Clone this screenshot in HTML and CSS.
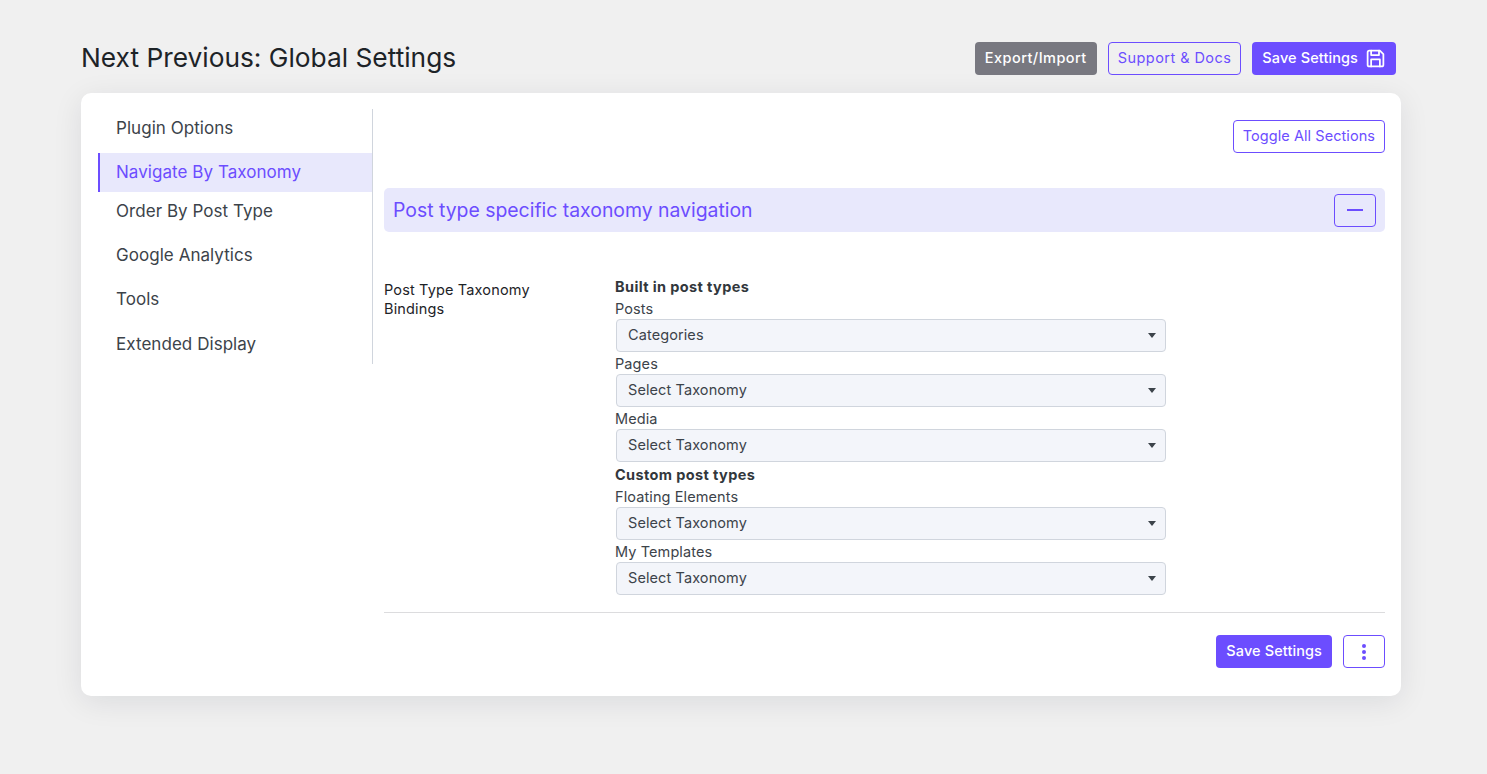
FILE: index.html
```html
<!DOCTYPE html>
<html lang="en">
<head>
  <meta charset="UTF-8">
  <title>Next Previous: Global Settings</title>
  <link rel="stylesheet" href="styles.css">
</head>
<body>
  <div class="wrap">
    <div class="page-header">
      <h1>Next Previous: Global Settings</h1>
      <div class="header-actions">
        <a class="btn btn-grey">Export/Import</a>
        <a class="btn btn-outline btn-wide">Support &amp; Docs</a>
        <a class="btn btn-primary">Save Settings
          <svg class="save-icon" viewBox="0 0 24 24" width="21" height="21" fill="none" stroke="currentColor" stroke-width="2" stroke-linejoin="round" stroke-linecap="round">
            <path d="M5 3h12l4 4v12a2 2 0 0 1-2 2H5a2 2 0 0 1-2-2V5a2 2 0 0 1 2-2z"/>
            <path d="M17 21v-8H7v8"/>
            <path d="M7 3v5h9V3"/>
          </svg>
        </a>
      </div>
    </div>

    <div class="card">
      <ul class="side-nav">
        <li>Plugin Options</li>
        <li class="active">Navigate By Taxonomy</li>
        <li>Order By Post Type</li>
        <li>Google Analytics</li>
        <li>Tools</li>
        <li>Extended Display</li>
      </ul>

      <div class="content">
        <div class="toggle-row">
          <a class="btn btn-outline btn-toggle">Toggle All Sections</a>
        </div>

        <div class="section-head">
          <h2>Post type specific taxonomy navigation</h2>
          <a class="btn btn-outline btn-icon">
            <svg viewBox="0 0 16 16" width="16" height="16" fill="none" stroke="currentColor" stroke-width="2"><path d="M0 8h16"/></svg>
          </a>
        </div>

        <div class="form-row">
          <div class="form-label">Post Type Taxonomy Bindings</div>
          <div class="form-fields">
            <div class="group-title">Built in post types</div>
            <label class="field-label">Posts</label>
            <div class="select-box"><select><option>Categories</option></select></div>
            <label class="field-label">Pages</label>
            <div class="select-box"><select><option>Select Taxonomy</option></select></div>
            <label class="field-label">Media</label>
            <div class="select-box"><select><option>Select Taxonomy</option></select></div>
            <div class="group-title">Custom post types</div>
            <label class="field-label">Floating Elements</label>
            <div class="select-box"><select><option>Select Taxonomy</option></select></div>
            <label class="field-label">My Templates</label>
            <div class="select-box"><select><option>Select Taxonomy</option></select></div>
          </div>
        </div>

        <div class="footer-actions">
          <a class="btn btn-primary">Save Settings</a>
          <a class="btn btn-outline btn-dots">
            <svg viewBox="0 0 6 20" width="6" height="20" fill="currentColor"><circle cx="3" cy="4" r="2"/><circle cx="3" cy="10" r="2"/><circle cx="3" cy="16" r="2"/></svg>
          </a>
        </div>
      </div>
    </div>
  </div>
</body>
</html>
```

FILE: styles.css
```css
* {
  box-sizing: border-box;
}
html, body {
  min-height: 100%;
}
body {
  background: #f0f0f0;
  font-family: Inter, 'Noto Sans', sans-serif;
  margin: 0;
  color: #3c434a;
  font-size: 15px;
}
.wrap {
  width: 1320px;
  margin-left: 81px;
  min-height: 100vh;
}
.page-header {
  display: flex;
  justify-content: space-between;
  align-items: center;
  height: 93px;
  padding-top: 24px;
  padding-right: 5px;
}
.page-header h1 {
  margin: 0 0 2px 0;
  font-size: 26.3px;
  font-weight: 400;
  color: #1d2327;
}
.header-actions {
  display: flex;
  gap: 11px;
}
.btn {
  display: inline-flex;
  align-items: center;
  justify-content: center;
  height: 33px;
  padding: 0 9px 2px 9px;
  border-radius: 4px;
  border: 1px solid transparent;
  font-size: 14.5px;
  white-space: nowrap;
}
.btn-grey {
  background: #787880;
  color: #fff;
  font-weight: 450;
  letter-spacing: 0.45px;
}
.btn-outline {
  background: transparent;
  border-color: #6c4dff;
  color: #6c4dff;
}
.btn-wide {
  letter-spacing: 0.45px;
}
.btn-toggle {
  letter-spacing: 0.06px;
}
.btn-primary {
  background: #6c4dff;
  color: #fff;
  font-weight: 450;
  letter-spacing: 0.1px;
}
.save-icon {
  margin-left: 7px;
  margin-top: 2px;
}
.card {
  display: flex;
  align-items: flex-start;
  height: 603px;
  background: #fff;
  border-radius: 10px;
  box-shadow: 0 6px 30px rgba(16,24,40,0.09);
  padding: 16px 16px 0 17px;
}
.side-nav {
  list-style: none;
  margin: 0;
  padding: 0;
  width: 275px;
  flex: none;
  border-right: 1px solid #d0d5dd;
  height: 255px;
}
.side-nav li {
  height: 39px;
  line-height: 39px;
  padding-left: 18px;
  margin-bottom: 5px;
  font-size: 17px;
  letter-spacing: 0.05px;
  color: #3c434a;
}
.side-nav li.active {
  background: #e8e8fc;
  color: #6c4dff;
  border-left: 2px solid #6c4dff;
  padding-left: 16px;
  margin-bottom: 0;
}
.side-nav li:last-child {
  margin-top: 6px;
}
.content {
  flex: 1;
  margin-left: 11px;
}
.toggle-row {
  display: flex;
  justify-content: flex-end;
  padding-top: 11px;
}
.section-head {
  display: flex;
  justify-content: space-between;
  align-items: center;
  height: 44px;
  margin-top: 35px;
  padding: 0 9px;
  background: #e8e8fc;
  border-radius: 5px;
}
.section-head h2 {
  margin: 0;
  font-size: 19.4px;
  font-weight: 400;
  color: #6c4dff;
}
.btn-icon {
  width: 42px;
  padding: 0;
}
.form-row {
  display: flex;
  padding-top: 45px;
  padding-bottom: 17px;
  border-bottom: 1px solid #dcdcde;
}
.form-label {
  width: 231px;
  padding-top: 3px;
  padding-right: 50px;
  line-height: 19px;
  color: #1d2327;
  font-size: 14.5px;
  letter-spacing: 0.15px;
}
.form-fields {
  width: 552px;
}
.group-title {
  font-weight: 700;
  line-height: 20px;
  font-size: 14.5px;
  letter-spacing: 0.38px;
  margin-top: 3px;
  color: #32373c;
}
.form-fields .group-title:first-child {
  margin-top: 0;
}
.field-label {
  display: block;
  line-height: 24px;
  height: 22px;
  font-size: 14.5px;
  letter-spacing: 0.1px;
}
.select-box {
  position: relative;
  margin-left: 1px;
  width: 550px;
  height: 33px;
}
.select-box select {
  appearance: none;
  display: block;
  width: 100%;
  height: 100%;
  padding: 0 11px 2px 11px;
  background: #f3f5fa;
  border: 1px solid #d0d5dd;
  border-radius: 4px;
  color: #3c434a;
  font-family: inherit;
  font-size: 14.5px;
  letter-spacing: 0.1px;
}
.select-box::after {
  content: "";
  position: absolute;
  right: 10px;
  top: 14px;
  border-style: solid;
  border-width: 5px 4px 0 4px;
  border-color: #3c434a transparent transparent transparent;
}
.footer-actions {
  display: flex;
  justify-content: flex-end;
  gap: 11px;
  padding-top: 22px;
}
.btn-dots {
  width: 42px;
  padding: 0;
}
```
